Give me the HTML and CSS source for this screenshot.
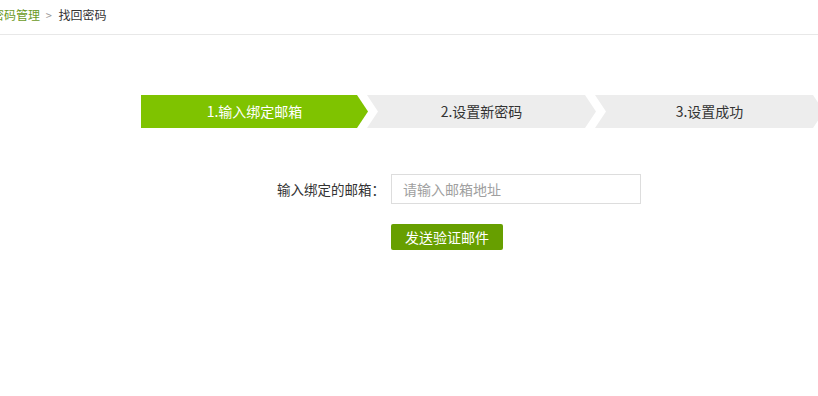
FILE: index.html
```html
<!DOCTYPE html>
<html lang="zh-CN">
  <head>
    <meta charset="UTF-8" />
    <meta name="viewport" content="width=device-width, initial-scale=1.0" />
    <title>找回密码</title>
    <link rel="stylesheet" href="styles.css">
  </head>
  <body>
    <div class="breadcrumb">
      <a href="#" class="crumb-link">密码管理</a>
      <span class="crumb-sep">&gt;</span>
      <span class="crumb-current">找回密码</span>
    </div>
    <div class="main">
      <div class="steps">
        <div class="step step-active">1.输入绑定邮箱</div>
        <div class="step">2.设置新密码</div>
        <div class="step">3.设置成功</div>
      </div>
      <form class="find-form" onsubmit="return false;">
        <div class="form-row">
          <label class="form-label" for="email">输入绑定的邮箱：</label>
          <input class="form-input" id="email" type="text" placeholder="请输入邮箱地址" />
        </div>
        <div class="form-row">
          <span class="form-label"></span>
          <button class="send-button" type="submit">发送验证邮件</button>
        </div>
      </form>
    </div>
  </body>
</html>
```

FILE: styles.css
```css
html,
body {
  overflow: hidden;
}
body {
  font-family: "Microsoft YaHei", "Noto Sans CJK SC", sans-serif;
  background-color: #ffffff;
  color: #333;
  margin: 0;
}
.breadcrumb {
  height: 34px;
  line-height: 30px;
  font-size: 12px;
  border-bottom: 1px solid #e8e8e8;
  margin-left: -8px;
  white-space: nowrap;
}
.crumb-link {
  color: #6b9a1e;
  text-decoration: none;
}
.crumb-sep {
  color: #999;
  font-size: 11px;
  margin: 0 4px 0 3px;
}
.crumb-current {
  color: #333;
}
.main {
  padding-top: 60px;
}
.steps {
  display: flex;
  margin-left: 141px;
  width: 800px;
}
.step {
  flex: 0 0 229px;
  height: 33px;
  line-height: 33px;
  text-align: center;
  font-size: 14px;
  color: #333;
  background-color: #ededed;
  margin-left: -1px;
  clip-path: polygon(0 0, calc(100% - 11px) 0, 100% 50%, calc(100% - 11px) 100%, 0 100%, 11px 50%);
}
.step-active {
  flex-basis: 227px;
  margin-left: 0;
  color: #fff;
  background-color: #7fc300;
  clip-path: polygon(0 0, calc(100% - 11px) 0, 100% 50%, calc(100% - 11px) 100%, 0 100%);
}
.find-form {
  margin-top: 46px;
}
.form-row {
  display: flex;
  align-items: center;
  margin-bottom: 20px;
}
.form-label {
  width: 385px;
  flex: 0 0 385px;
  text-align: right;
  font-size: 13.5px;
  color: #333;
  margin-right: 6px;
}
.form-input {
  width: 250px;
  height: 30px;
  box-sizing: border-box;
  border: 1px solid #ddd;
  padding: 0 11px;
  font-family: inherit;
  font-size: 14px;
  color: #333;
  outline: none;
}
.form-input::placeholder {
  color: #a0a0a0;
}
.send-button {
  height: 26px;
  width: 112px;
  padding: 0;
  background-color: #679f00;
  color: #fff;
  border: none;
  border-radius: 2px;
  font-family: inherit;
  font-size: 14px;
  cursor: pointer;
}
```
